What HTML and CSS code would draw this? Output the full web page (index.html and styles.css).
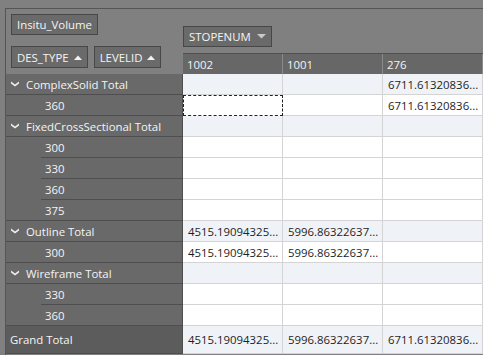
FILE: index.html
```html
<!DOCTYPE html>
<html>
<head>
<meta charset="utf-8">
<link rel="stylesheet" href="styles.css">
</head>
<body>
<div class="panel">
  <div class="left">
    <div class="filter-zone">
      <span class="fbtn">Insitu_Volume</span>
    </div>
    <div class="row-fields">
      <span class="fbtn">DES_TYPE <svg class="tri" width="8" height="5" viewBox="0 0 8 5"><polygon points="0,5 8,5 4,0.5" fill="#f2f2f2"/></svg></span>
      <span class="fbtn">LEVELID <svg class="tri" width="8" height="5" viewBox="0 0 8 5"><polygon points="0,5 8,5 4,0.5" fill="#f2f2f2"/></svg></span>
    </div>
    <div class="rh cat"><svg class="chev" width="8" height="6" viewBox="0 0 8 6"><polygon points="0,0.5 4,3.5 8,0.5 8,2.5 4,5.5 0,2.5" fill="#f0f0f0"/></svg>ComplexSolid Total</div>
    <div class="rh child last"><span class="in">360</span></div>
    <div class="rh cat"><svg class="chev" width="8" height="6" viewBox="0 0 8 6"><polygon points="0,0.5 4,3.5 8,0.5 8,2.5 4,5.5 0,2.5" fill="#f0f0f0"/></svg>FixedCrossSectional Total</div>
    <div class="rh child"><span class="in">300</span></div>
    <div class="rh child"><span class="in">330</span></div>
    <div class="rh child"><span class="in">360</span></div>
    <div class="rh child last"><span class="in">375</span></div>
    <div class="rh cat"><svg class="chev" width="8" height="6" viewBox="0 0 8 6"><polygon points="0,0.5 4,3.5 8,0.5 8,2.5 4,5.5 0,2.5" fill="#f0f0f0"/></svg>Outline Total</div>
    <div class="rh child last"><span class="in">300</span></div>
    <div class="rh cat"><svg class="chev" width="8" height="6" viewBox="0 0 8 6"><polygon points="0,0.5 4,3.5 8,0.5 8,2.5 4,5.5 0,2.5" fill="#f0f0f0"/></svg>Wireframe Total</div>
    <div class="rh child"><span class="in">330</span></div>
    <div class="rh child last"><span class="in">360</span></div>
    <div class="rh grand">Grand Total</div>
  </div>
  <div class="right">
    <div class="col-fields">
      <span class="fbtn">STOPENUM <svg class="tri" width="9" height="5" viewBox="0 0 9 5"><polygon points="0,0 9,0 4.5,4.5" fill="#c8c8c8"/></svg></span>
    </div>
    <div class="hrow">
      <div class="hc">1002</div><div class="hc">1001</div><div class="hc">276</div>
    </div>
    <div class="drow tot"><div class="dc"></div><div class="dc"></div><div class="dc">6711.61320836...</div></div>
    <div class="drow"><div class="dc focus"></div><div class="dc"></div><div class="dc">6711.61320836...</div></div>
    <div class="drow tot"><div class="dc"></div><div class="dc"></div><div class="dc"></div></div>
    <div class="drow"><div class="dc"></div><div class="dc"></div><div class="dc"></div></div>
    <div class="drow"><div class="dc"></div><div class="dc"></div><div class="dc"></div></div>
    <div class="drow"><div class="dc"></div><div class="dc"></div><div class="dc"></div></div>
    <div class="drow"><div class="dc"></div><div class="dc"></div><div class="dc"></div></div>
    <div class="drow tot"><div class="dc">4515.19094325...</div><div class="dc">5996.86322637...</div><div class="dc"></div></div>
    <div class="drow"><div class="dc">4515.19094325...</div><div class="dc">5996.86322637...</div><div class="dc"></div></div>
    <div class="drow tot"><div class="dc"></div><div class="dc"></div><div class="dc"></div></div>
    <div class="drow"><div class="dc"></div><div class="dc"></div><div class="dc"></div></div>
    <div class="drow"><div class="dc"></div><div class="dc"></div><div class="dc"></div></div>
    <div class="drow tot grand"><div class="dc">4515.19094325...</div><div class="dc">5996.86322637...</div><div class="dc">6711.61320836...</div></div>
  </div>
</div>
</body>
</html>
```
FILE: styles.css
```css
* { box-sizing: border-box; }
html, body { margin: 0; padding: 0; }
body {
  background: #808080;
  width: 483px;
  height: 355px;
  overflow: hidden;
  font-family: "Open Sans", "Noto Sans", sans-serif;
  font-size: 11.4px;
}
.panel {
  margin: 8px 0 0 5px;
  border-top: 1px solid #555;
  border-left: 1px solid #555;
  display: flex;
  height: 347px;
  background: #808080;
}
.left {
  width: 177px;
  flex: none;
  display: flex;
  flex-direction: column;
}
.filter-zone {
  padding: 5px 0 0 5px;
  height: 37px;
  display: flex;
  align-items: flex-start;
}
.fbtn {
  display: inline-flex;
  align-items: center;
  gap: 5px;
  height: 21px;
  padding: 0 5px;
  background: #6a6a6a;
  border: 1px solid #474747;
  color: #f4f4f4;
  white-space: nowrap;
}
.tri { display: block; }
.row-fields {
  display: flex;
  gap: 6px;
  padding-left: 5px;
  height: 28px;
}
.row-fields .fbtn { height: 22px; }
.rh {
  height: 21px;
  display: flex;
  align-items: center;
  background: #696969;
  color: #f4f4f4;
  border-bottom: 1px solid #4e4e4e;
  border-right: 1px solid #4e4e4e;
  white-space: nowrap;
}
.rh.cat { padding-left: 5px; }
.chev { margin-right: 7px; flex: none; }
.rh.child { border-bottom: none; padding-left: 35px; }
.rh.child .in {
  display: flex;
  align-items: center;
  height: 100%;
  width: 100%;
  padding-left: 4px;
  border-bottom: 1px solid #4e4e4e;
}
.rh.child.last { border-bottom: 1px solid #4e4e4e; }
.rh.child.last .in { border-bottom: none; }
.rh.grand {
  height: 28px;
  background: #5c5c5c;
  padding-left: 4px;
}
.right {
  flex: 1;
  display: flex;
  flex-direction: column;
  min-width: 0;
}
.col-fields {
  height: 44px;
  padding: 17px 0 0 0;
  display: flex;
}
.col-fields .fbtn { gap: 6px; }
.hrow {
  display: flex;
  height: 21px;
  border-top: 1px solid #505050;
  background: #676767;
}
.hc {
  width: 100px;
  flex: none;
  color: #f4f4f4;
  padding-left: 4px;
  display: flex;
  align-items: center;
  border-right: 1px solid #8a8a8a;
}
.drow {
  display: flex;
  height: 21px;
  background: #fff;
}
.drow.tot { background: #eff3f8; }
.drow.grand { height: 28px; }
.dc {
  width: 100px;
  flex: none;
  border-right: 1px solid #d4d4d4;
  border-bottom: 1px solid #d4d4d4;
  color: #1e1e1e;
  padding-left: 5px;
  display: flex;
  align-items: center;
  white-space: nowrap;
  overflow: hidden;
}
.dc.focus {
  background: #fff;
  border: 1px dashed #222;
}
```
